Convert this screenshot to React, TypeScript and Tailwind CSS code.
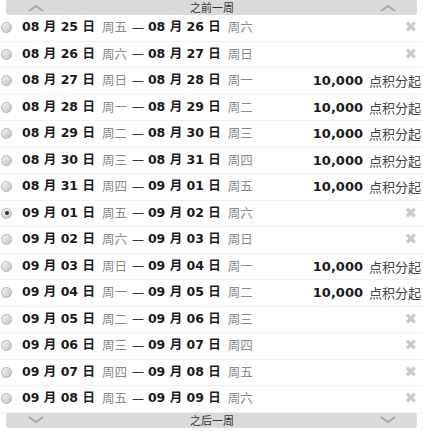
import React from 'react';

type Row = { a: string; aw: string; b: string; bw: string; price?: boolean; checked?: boolean };

const rows: Row[] = [
    { a: '08|25', aw: '周五', b: '08|26', bw: '周六' },
    { a: '08|26', aw: '周六', b: '08|27', bw: '周日' },
    { a: '08|27', aw: '周日', b: '08|28', bw: '周一', price: true },
    { a: '08|28', aw: '周一', b: '08|29', bw: '周二', price: true },
    { a: '08|29', aw: '周二', b: '08|30', bw: '周三', price: true },
    { a: '08|30', aw: '周三', b: '08|31', bw: '周四', price: true },
    { a: '08|31', aw: '周四', b: '09|01', bw: '周五', price: true },
    { a: '09|01', aw: '周五', b: '09|02', bw: '周六', checked: true },
    { a: '09|02', aw: '周六', b: '09|03', bw: '周日' },
    { a: '09|03', aw: '周日', b: '09|04', bw: '周一', price: true },
    { a: '09|04', aw: '周一', b: '09|05', bw: '周二', price: true },
    { a: '09|05', aw: '周二', b: '09|06', bw: '周三' },
    { a: '09|06', aw: '周三', b: '09|07', bw: '周四' },
    { a: '09|07', aw: '周四', b: '09|08', bw: '周五' },
    { a: '09|08', aw: '周五', b: '09|09', bw: '周六' },
];

const font = { fontFamily: '"DejaVu Sans", "Noto Sans CJK SC", sans-serif' };
const cjk = { fontFamily: '"Noto Sans CJK SC", sans-serif' };

function DateText({ d }: { d: string }) {
    const [m, day] = d.split('|');
    return (
        <span className="font-bold text-[12.5px] text-[#1a1a1a]">
            {m} 月 {day} 日
        </span>
    );
}

function Radio({ checked }: { checked?: boolean }) {
    return (
        <span className="w-[11px] h-[11px] rounded-full border border-[#b5b5b5] bg-gradient-to-br from-[#f6f6f6] to-[#c2c2c2] flex items-center justify-center">
            {checked && <span className="w-[4px] h-[4px] rounded-full bg-[#333]" />}
        </span>
    );
}

function Chevron({ up }: { up?: boolean }) {
    return (
        <svg width="16" height="8" viewBox="0 0 16 8">
            <path
                d={up ? 'M1 7 L8 2 L15 7' : 'M1 1 L8 6 L15 1'}
                fill="none"
                stroke="#a9a9a9"
                strokeWidth="2"
            />
        </svg>
    );
}

function Bar({ label, up }: { label: string; up?: boolean }) {
    return (
        <div
            className={`mx-[6px] h-[15px] bg-[#dadada] flex items-center justify-between pl-[22px] pr-[21px] ${up ? 'rounded-b-[3px]' : 'rounded-[3px]'}`}
        >
            <Chevron up={up} />
            <span className="text-[11px] text-[#333] leading-none" style={cjk}>
                {label}
            </span>
            <Chevron up={up} />
        </div>
    );
}

export default function App() {
    return (
        <div className="w-[423px] h-[431px] bg-white overflow-hidden relative" style={font}>
            <Bar label="之前一周" up />
            <div>
                {rows.map((r, i) => (
                    <div key={i} className="h-[26.5px] flex items-center border-b border-[#efefef] pl-[1px] pr-[3px]">
                        <Radio checked={r.checked} />
                        <div className="ml-[10px] flex items-center">
                            <DateText d={r.a} />
                            <span className="ml-[7px] text-[12.5px] text-[#8a8a8a]" style={cjk}>{r.aw}</span>
                            <span className="ml-[5px] mr-[4px] text-[12px] text-[#333]">—</span>
                            <DateText d={r.b} />
                            <span className="ml-[7px] text-[12.5px] text-[#8a8a8a]" style={cjk}>{r.bw}</span>
                        </div>
                        <div className="ml-auto flex items-center">
                            {r.price ? (
                                <>
                                    <span className="font-bold text-[13px] text-[#1a1a1a]">10,000</span>
                                    <span className="ml-[6px] mr-[-1px] text-[13px] text-[#444]" style={cjk}>
                                        点积分起
                                    </span>
                                </>
                            ) : (
                                <span className="mr-[3px] text-[15px] text-[#cacaca] leading-none">✖</span>
                            )}
                        </div>
                    </div>
                ))}
            </div>
            <Bar label="之后一周" />
        </div>
    );
}
